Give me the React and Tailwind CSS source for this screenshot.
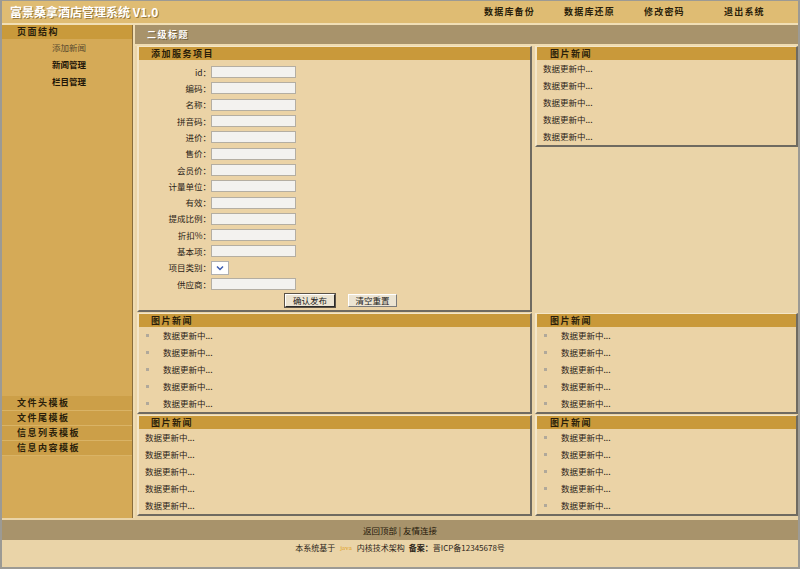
const font = { fontFamily: '"Noto Sans CJK SC", "Liberation Sans", sans-serif' };

const navItems = ["数据库备份", "数据库还原", "修改密码", "退出系统"];
const sideTop = ["添加新闻", "新闻管理", "栏目管理"];
const sideBottom = ["文件头模板", "文件尾模板", "信息列表模板", "信息内容模板"];
const formFields = [
  "id",
  "编码",
  "名称",
  "拼音码",
  "进价",
  "售价",
  "会员价",
  "计量单位",
  "有效",
  "提成比例",
  "折扣%",
  "基本项",
  "项目类别",
  "供应商",
];
const rows = [1, 2, 3, 4, 5];

function PanelHead({ title, pad = "pl-[12px]" }) {
  return (
    <div className={`h-[13px] bg-[#c9993a] ${pad} flex items-center text-[9px] font-bold tracking-[1.5px] text-[#2a1e0a]`}>
      {title}
    </div>
  );
}

function Panel({ title, children, className = "", pad }) {
  return (
    <div
      className={`bg-[#ebd3a6] border-l-[2px] border-t-[1px] border-r-[2px] border-b-[2px] border-l-[#f4e6c8] border-t-[#f4e6c8] border-r-[#6f6a60] border-b-[#6f6a60] ${className}`}
    >
      <PanelHead title={title} pad={pad} />
      {children}
    </div>
  );
}

function NewsList({ bullet, textPad }) {
  return (
    <div>
      {rows.map((i) => (
        <div key={i} className="h-[17px] flex items-center text-[8.5px] text-[#2b2418]">
          {bullet ? (
            <>
              <span className="ml-[7px] w-[3px] h-[3px] bg-[#b0a89a]" />
              <span className={textPad}>数据更新中...</span>
            </>
          ) : (
            <span className="pl-[6px]">数据更新中...</span>
          )}
        </div>
      ))}
    </div>
  );
}

function ServiceForm() {
  return (
    <div className="pt-[4px]">
      {formFields.map((label) => (
        <div key={label} className="h-[16.3px] flex items-center">
          <div className="w-[72px] text-right text-[8.5px] text-[#2b2418]">{label}：</div>
          <div>
            {label === "项目类别" ? (
              <div className="w-[18px] h-[14px] bg-white border border-[#b0b0b0] flex items-center justify-center">
                <svg width="8" height="6" viewBox="0 0 8 6">
                  <path d="M1 1.5 L4 4.5 L7 1.5" fill="none" stroke="#3b5bb0" strokeWidth="1.5" />
                </svg>
              </div>
            ) : (
              <div className="w-[85px] h-[12px] bg-[#f3f2ef] border border-[#b4aea2]" />
            )}
          </div>
        </div>
      ))}
      <div className="h-[17px] flex items-center">
        <button className="ml-[146px] w-[50px] h-[13px] bg-[#ece4d2] border border-t-[#ffffff] border-l-[#ffffff] border-r-[#2a2a2a] border-b-[#2a2a2a] outline outline-1 outline-[#5a5246] text-[8.5px] text-[#1a1a1a] leading-none">
          确认发布
        </button>
        <button className="ml-[13px] w-[49px] h-[13px] bg-[#ece4d2] border border-t-[#ffffff] border-l-[#ffffff] border-r-[#7a7a7a] border-b-[#7a7a7a] text-[8.5px] text-[#1a1a1a] leading-none">
          清空重置
        </button>
      </div>
    </div>
  );
}

export default function App() {
  return (
    <div style={font} className="w-[800px] h-[569px] bg-[#ead4a8] border-l-[2px] border-t-[1px] border-r-[2px] border-b-[2px] border-[#9c9a94] flex flex-col overflow-hidden">
      {/* header */}
      <div className="h-[24px] shrink-0 bg-[#dfbc73] flex items-center border-b-[2px] border-[#f1dfb6]">
        <div className="pl-[8px] text-[12px] font-bold text-white [text-shadow:1px_1px_0_#9a7a3a]">
          富景桑拿酒店管理系统 V1.0
        </div>
        <div className="ml-auto flex">
          {navItems.map((n, i) => (
            <div
              key={n}
              className={`${i === 3 ? "w-[74px]" : "w-[80px]"} text-[9px] font-bold tracking-[1.2px] text-[#2a1e0a]`}
            >
              {n}
            </div>
          ))}
        </div>
      </div>

      {/* body */}
      <div className="flex h-[493px] shrink-0">
        {/* sidebar */}
        <div className="w-[131px] bg-[#d5aa57] border-r-[1px] border-[#8a6e3c] flex flex-col">
          <div className="h-[14px] bg-[#c99a3b] pl-[15px] flex items-center text-[9px] font-bold tracking-[1.5px] text-[#2a1e0a]">
            页面结构
          </div>
          <div>
            {sideTop.map((s, i) => (
              <div
                key={s}
                className={`h-[17px] flex items-center pl-[50px] text-[8.5px] ${i === 0 ? "text-[#5a4a2e]" : "text-[#1e1608] font-semibold"}`}
              >
                {s}
              </div>
            ))}
          </div>
          <div className="mt-auto mb-[62px] flex flex-col">
            {sideBottom.map((s) => (
              <div
                key={s}
                className="h-[15px] bg-[#cc9f48] border-b border-[#d9b366] pl-[15px] flex items-center text-[9px] font-bold tracking-[1.5px] text-[#2a1e0a]"
              >
                {s}
              </div>
            ))}
          </div>
        </div>

        {/* main */}
        <div className="flex-1 border-l-[2px] border-[#efdcb2] flex flex-col">
          <div className="h-[21px] shrink-0 bg-[#a8936b] pl-[12px] flex items-center text-[9px] font-bold tracking-[1.5px] text-white [text-shadow:1px_1px_0_#6e5c3a] border-b-[2px] border-[#efdcb2]">
            二级标题
          </div>
          <div className="pl-[2px] flex flex-col gap-[1px]">
            <div className="flex gap-[3px] items-start">
              <Panel title="添加服务项目" className="w-[395px] h-[266px]">
                <ServiceForm />
              </Panel>
              <Panel title="图片新闻" className="flex-1" pad="pl-[13px]">
                <NewsList />
              </Panel>
            </div>
            <div className="flex gap-[3px]">
              <Panel title="图片新闻" className="w-[395px]">
                <NewsList bullet textPad="pl-[14px]" />
              </Panel>
              <Panel title="图片新闻" className="flex-1" pad="pl-[13px]">
                <NewsList bullet textPad="pl-[14px]" />
              </Panel>
            </div>
            <div className="flex gap-[3px]">
              <Panel title="图片新闻" className="w-[395px]">
                <NewsList />
              </Panel>
              <Panel title="图片新闻" className="flex-1" pad="pl-[13px]">
                <NewsList bullet textPad="pl-[14px]" />
              </Panel>
            </div>
          </div>
        </div>
      </div>

      {/* footer */}
      <div className="mt-[2px] h-[20px] shrink-0 bg-[#a8936b] flex items-center justify-center text-[8.5px] text-[#1e1608]">
        返回顶部 | 友情连接
      </div>
      <div className="h-[16px] shrink-0 flex items-center justify-center text-[8px] text-[#2b2418]">
        本系统基于
        <span className="mx-[5px] text-[7px] text-[#e0a020]" style={{ fontFamily: '"Liberation Serif", serif' }}>
          java
        </span>
        内核技术架构
        <span className="ml-[4px] font-bold">备案：</span>晋ICP备12345678号
      </div>
    </div>
  );
}
